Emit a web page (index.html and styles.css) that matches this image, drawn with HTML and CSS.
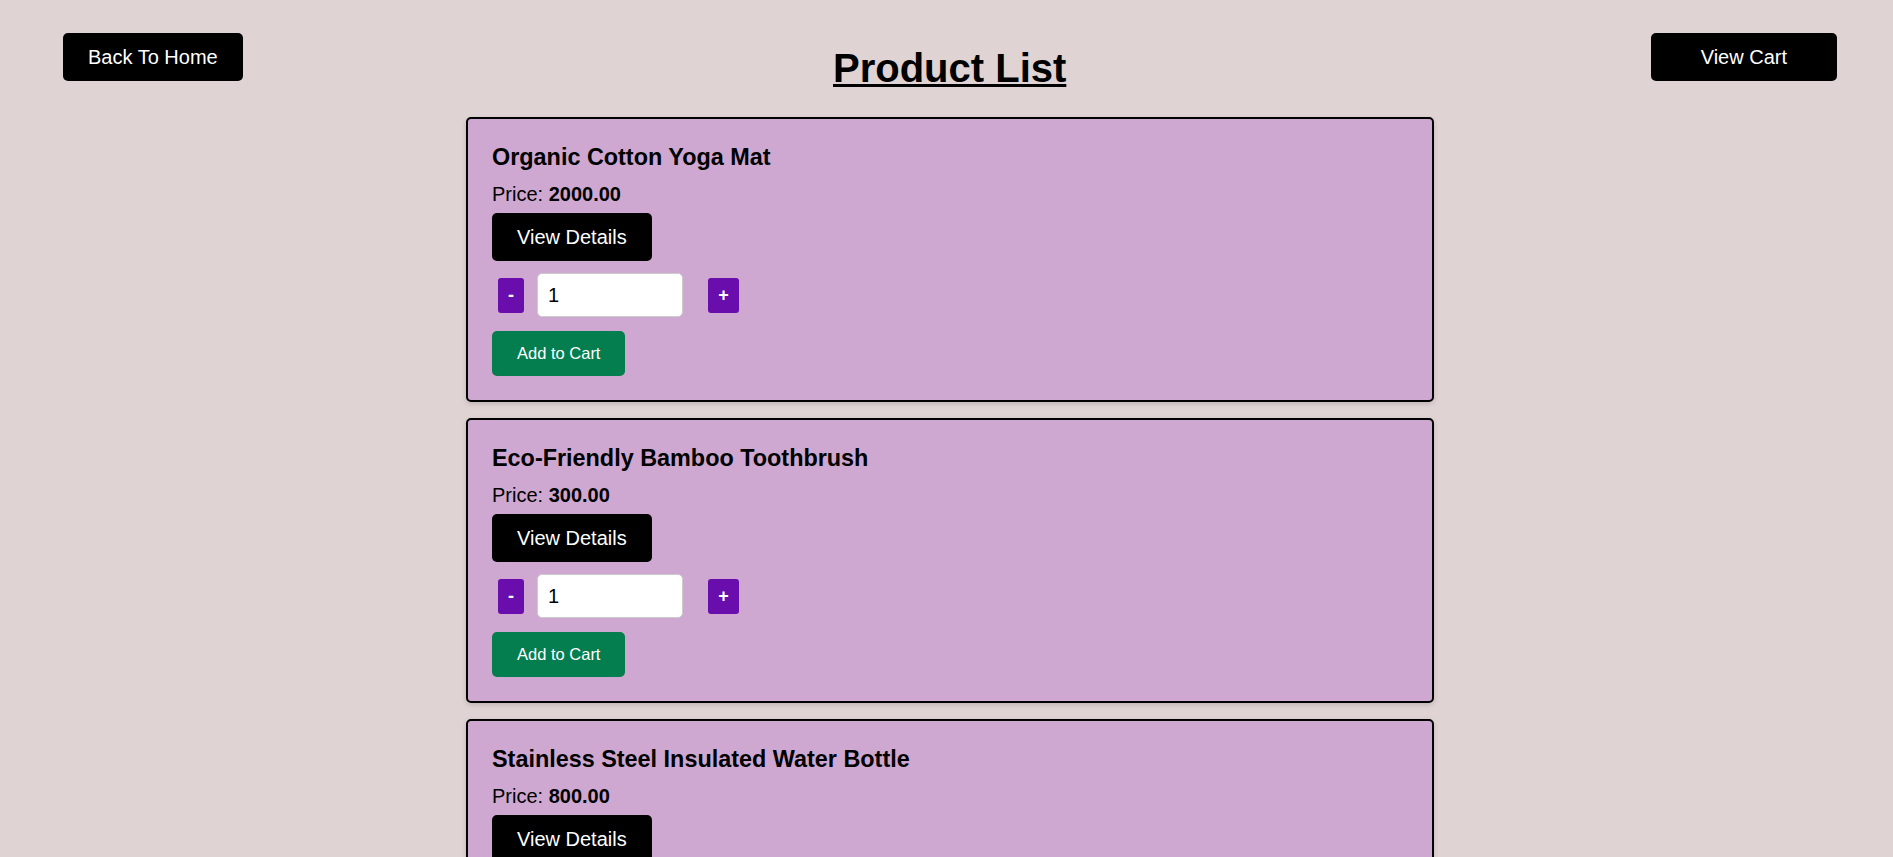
FILE: index.html
```html
<!DOCTYPE html>
<html lang="en">
<head>
<meta charset="utf-8">
<title>Product List</title>
<link rel="stylesheet" href="styles.css">
</head>
<body>
<header class="top-bar">
  <button class="btn btn-dark btn-home">Back To Home</button>
  <h1 class="page-title">Product List</h1>
  <button class="btn btn-dark btn-cart">View Cart</button>
</header>
<main class="product-list">
  <div class="product-card">
    <h3 class="product-name">Organic Cotton Yoga Mat</h3>
    <p class="product-price">Price: <strong>2000.00</strong></p>
    <button class="btn btn-dark btn-details">View Details</button>
    <div class="qty-row">
      <button class="qty-btn qty-minus">-</button>
      <input class="qty-input" type="number" value="1">
      <button class="qty-btn qty-plus">+</button>
    </div>
    <button class="btn btn-add">Add to Cart</button>
  </div>
  <div class="product-card">
    <h3 class="product-name">Eco-Friendly Bamboo Toothbrush</h3>
    <p class="product-price">Price: <strong>300.00</strong></p>
    <button class="btn btn-dark btn-details">View Details</button>
    <div class="qty-row">
      <button class="qty-btn qty-minus">-</button>
      <input class="qty-input" type="number" value="1">
      <button class="qty-btn qty-plus">+</button>
    </div>
    <button class="btn btn-add">Add to Cart</button>
  </div>
  <div class="product-card">
    <h3 class="product-name">Stainless Steel Insulated Water Bottle</h3>
    <p class="product-price">Price: <strong>800.00</strong></p>
    <button class="btn btn-dark btn-details">View Details</button>
    <div class="qty-row">
      <button class="qty-btn qty-minus">-</button>
      <input class="qty-input" type="number" value="1">
      <button class="qty-btn qty-plus">+</button>
    </div>
    <button class="btn btn-add">Add to Cart</button>
  </div>
</main>
</body>
</html>
```
FILE: styles.css
```css
html {
  background: #e0d3d3;
}
body {
  margin: 0;
  font-family: "Liberation Sans", Arial, sans-serif;
  color: #000;
  background: #e0d3d3;
}
.top-bar {
  display: flex;
  justify-content: space-between;
  align-items: flex-start;
  padding: 33px 56px 0 63px;
}
.page-title {
  margin: 12px 0 0 6px;
  font-size: 40px;
  line-height: 46px;
  font-weight: bold;
  text-decoration: underline;
  text-decoration-thickness: 3px;
}
.btn {
  border: 0;
  cursor: pointer;
  font-family: "Liberation Sans", Arial, sans-serif;
  color: #fff;
  display: block;
}
.btn-dark {
  background: #000;
  font-size: 20px;
  line-height: 24px;
  padding: 12px 25px;
  border-radius: 5px;
}
.btn-cart {
  padding: 12px 50px;
}
.product-list {
  display: flex;
  flex-direction: column;
  align-items: center;
  gap: 16px;
  margin-top: 26px;
  padding-left: 7px;
  padding-bottom: 20px;
}
.product-card {
  box-sizing: border-box;
  width: 968px;
  background: #cea8d1;
  border: 2px solid #000;
  border-radius: 5px;
  padding: 25px 24px 24px;
  box-shadow: 0 2px 5px rgba(0, 0, 0, 0.15);
}
.product-name {
  margin: 0;
  font-size: 23.4px;
  line-height: 26px;
  font-weight: bold;
}
.product-price {
  margin: 13px 0 0;
  font-size: 20px;
  line-height: 23px;
}
.btn-details {
  margin-top: 7px;
}
.qty-row {
  display: flex;
  align-items: center;
  margin-top: 12px;
}
.qty-btn {
  border: 0;
  background: #6a0dad;
  color: #fff;
  font-family: "Liberation Sans", Arial, sans-serif;
  font-weight: bold;
  font-size: 18px;
  line-height: 21px;
  padding: 7px 0;
  border-radius: 3px;
  cursor: pointer;
}
.qty-minus {
  width: 26px;
  margin-left: 6px;
  margin-right: 13px;
}
.qty-plus {
  width: 31px;
}
.qty-input {
  box-sizing: border-box;
  width: 146px;
  height: 44px;
  margin: 0 25px 0 0;
  padding: 0 10px;
  border: 1px solid #ccc;
  border-radius: 5px;
  background: #fff;
  font-family: "Liberation Sans", Arial, sans-serif;
  font-size: 20px;
  color: #000;
  -moz-appearance: textfield;
  appearance: textfield;
}
.qty-input::-webkit-outer-spin-button,
.qty-input::-webkit-inner-spin-button {
  -webkit-appearance: none;
  margin: 0;
}
.btn-add {
  margin-top: 14px;
  background: #047d4f;
  font-size: 16.5px;
  line-height: 19px;
  padding: 13px 25px;
  border-radius: 5px;
}
```
